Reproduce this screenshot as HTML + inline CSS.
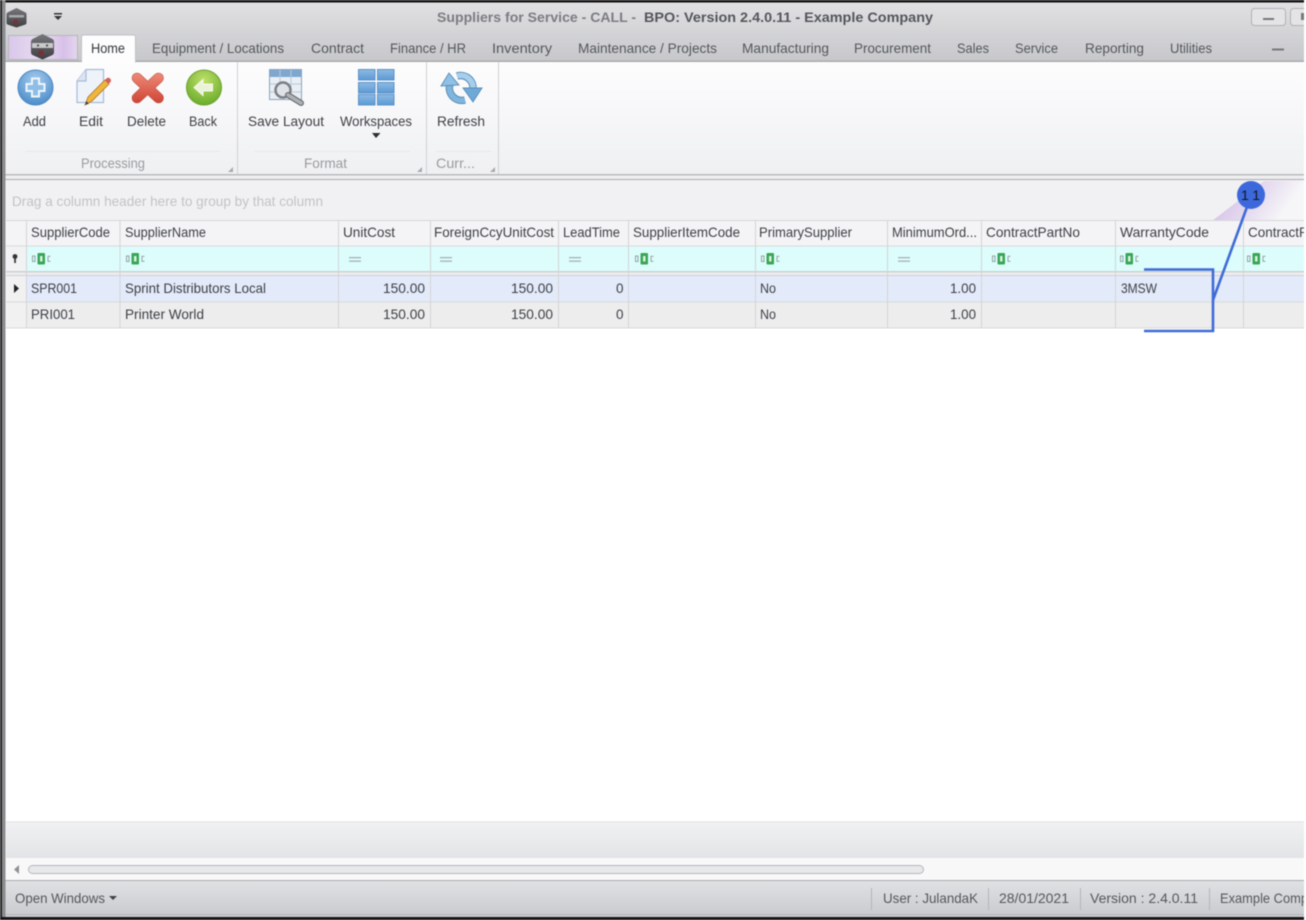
<!DOCTYPE html>
<html><head><meta charset="utf-8"><title>Suppliers for Service</title>
<style>
html,body{margin:0;padding:0;background:#fff;width:1306px;height:920px;overflow:hidden}
svg{display:block;filter:blur(0.4px)}
text{font-family:"Liberation Sans",sans-serif;font-size:14px;fill:#3c3f44;white-space:pre}
.t{fill:#54575c}.g{fill:#9a9b9e}.c{fill:#33363b}
</style></head><body>
<svg width="1306" height="920" viewBox="0 0 1306 920" xmlns="http://www.w3.org/2000/svg">
<defs>
<linearGradient id="tb" x1="0" y1="0" x2="0" y2="1"><stop offset="0" stop-color="#e2e2e4"/><stop offset="1" stop-color="#c6c7ca"/></linearGradient>
<linearGradient id="rb" x1="0" y1="0" x2="0" y2="1"><stop offset="0" stop-color="#fdfdfe"/><stop offset="1" stop-color="#eff0f2"/></linearGradient>
<linearGradient id="pn" x1="0" y1="0" x2="0" y2="1"><stop offset="0" stop-color="#f0f1f2"/><stop offset="1" stop-color="#e3e4e7"/></linearGradient>
<linearGradient id="st" x1="0" y1="0" x2="0" y2="1"><stop offset="0" stop-color="#e0e1e3"/><stop offset="1" stop-color="#c9cacd"/></linearGradient>
<linearGradient id="pu" x1="0" y1="0" x2="1" y2="0"><stop offset="0" stop-color="#d9c8ea"/><stop offset=".5" stop-color="#e9dcf1"/><stop offset=".8" stop-color="#d8c0e8"/><stop offset="1" stop-color="#e4d6ee"/></linearGradient>
<linearGradient id="sw" gradientUnits="userSpaceOnUse" x1="1225" y1="190" x2="1275" y2="225"><stop offset="0" stop-color="#d6c2e8"/><stop offset=".55" stop-color="#e6dcf0"/><stop offset="1" stop-color="#f6f6f8"/></linearGradient>
<radialGradient id="blue" cx=".5" cy=".3" r=".8"><stop offset="0" stop-color="#a9cdec"/><stop offset="1" stop-color="#3d84c6"/></radialGradient>
<radialGradient id="green" cx=".5" cy=".3" r=".8"><stop offset="0" stop-color="#bfe06a"/><stop offset="1" stop-color="#5fa522"/></radialGradient>
<linearGradient id="red" gradientUnits="userSpaceOnUse" x1="0" y1="73" x2="0" y2="103"><stop offset="0" stop-color="#ee8a78"/><stop offset="1" stop-color="#cf4536"/></linearGradient>
<linearGradient id="tile" x1="0" y1="0" x2="0" y2="1"><stop offset="0" stop-color="#8fbbe3"/><stop offset="1" stop-color="#5a99d4"/></linearGradient>
<linearGradient id="hex" x1="0" y1="0" x2="0" y2="1"><stop offset="0" stop-color="#77787c"/><stop offset="1" stop-color="#3d3e42"/></linearGradient>
</defs>

<!-- title bar -->
<rect width="1306" height="62" fill="url(#tb)"/>
<text x="437" y="22" textLength="203" lengthAdjust="spacingAndGlyphs" style="font-weight:bold;fill:#7b7d82">Suppliers for Service - CALL - </text>
<text x="644" y="22" textLength="289" lengthAdjust="spacingAndGlyphs" style="font-weight:bold;fill:#53565b">BPO: Version 2.4.0.11 - Example Company</text>
<!-- app icon -->
<path d="M16.500 8l9 4.500q1 .5 1 1.500v9q0 1-1 1.500l-9 3-9-3q-1-.5-1-1.500v-9q0-1 1-1.500z" fill="url(#hex)"/>
<rect x="9" y="15" width="15" height="2.500" fill="#a8a8aa"/>
<circle cx="15.500" cy="22" r="2.500" fill="#7a3238"/>
<!-- QAT -->
<rect x="54" y="13" width="8" height="1.500" fill="#333"/>
<polygon points="54,16 62,16 58,20" fill="#333"/>
<!-- window btn -->
<rect x="1251.500" y="8.500" width="34" height="17" rx="3" fill="#e4e4e6" stroke="#b0b1b4"/>
<rect x="1263" y="18" width="11" height="2" fill="#76787c"/>
<rect x="1290.500" y="8.500" width="20" height="17" rx="3" fill="#e4e4e6" stroke="#b0b1b4"/>
<rect x="1301" y="13" width="3" height="7" fill="#76787c"/>
<rect x="1272" y="48.500" width="12" height="2" fill="#76787c"/>

<!-- ribbon -->
<rect x="5" y="61" width="1300" height="114" fill="url(#rb)"/>
<rect x="0" y="60.500" width="1306" height="1.500" fill="#a9aaad"/>
<!-- app button -->
<rect x="8.500" y="35.500" width="69" height="24" fill="url(#pu)" stroke="#b6b6ba"/>
<path d="M42.500 34l10 5q1.500 1 1.500 2.500v11q0 1.500-1.500 2.500l-10 4.500-10-4.500q-1.500-1-1.500-2.500v-11q0-1.500 1.500-2.500z" fill="url(#hex)"/>
<rect x="32" y="43" width="21" height="5" fill="#c9c9cc"/>
<rect x="37" y="44.500" width="2" height="2" fill="#555"/><rect x="46" y="44.500" width="2" height="2" fill="#555"/>
<circle cx="41" cy="53" r="3" fill="#73323a"/>
<!-- Home tab -->
<path d="M81.500 62V37q0-2 2-2h50q2 0 2 2v25z" fill="#fdfdfe" stroke="#c0c1c4"/>
<rect x="82" y="60" width="53" height="3" fill="#fdfdfe"/>

<text class="c" x="91" y="53" textLength="34" lengthAdjust="spacingAndGlyphs">Home</text>
<text class="t" x="152" y="53" textLength="132" lengthAdjust="spacingAndGlyphs">Equipment / Locations</text>
<text class="t" x="311" y="53" textLength="53" lengthAdjust="spacingAndGlyphs">Contract</text>
<text class="t" x="390" y="53" textLength="76" lengthAdjust="spacingAndGlyphs">Finance / HR</text>
<text class="t" x="492" y="53" textLength="60" lengthAdjust="spacingAndGlyphs">Inventory</text>
<text class="t" x="578" y="53" textLength="139" lengthAdjust="spacingAndGlyphs">Maintenance / Projects</text>
<text class="t" x="742" y="53" textLength="87" lengthAdjust="spacingAndGlyphs">Manufacturing</text>
<text class="t" x="854" y="53" textLength="77" lengthAdjust="spacingAndGlyphs">Procurement</text>
<text class="t" x="957" y="53" textLength="32" lengthAdjust="spacingAndGlyphs">Sales</text>
<text class="t" x="1015" y="53" textLength="43" lengthAdjust="spacingAndGlyphs">Service</text>
<text class="t" x="1085" y="53" textLength="59" lengthAdjust="spacingAndGlyphs">Reporting</text>
<text class="t" x="1170" y="53" textLength="42" lengthAdjust="spacingAndGlyphs">Utilities</text>

<!-- ribbon separators -->
<rect x="237" y="62" width="1" height="112" fill="#d0d1d4"/>
<rect x="426" y="62" width="1" height="112" fill="#d0d1d4"/>
<rect x="498" y="62" width="1" height="112" fill="#d0d1d4"/>
<rect x="25" y="151" width="195" height="1" fill="#e6e7e9"/>
<rect x="255" y="151" width="155" height="1" fill="#e6e7e9"/>
<rect x="436" y="151" width="55" height="1" fill="#e6e7e9"/>

<!-- Add icon -->
<circle cx="35.500" cy="87.500" r="17.500" fill="url(#blue)" stroke="#4b87bf"/>
<path d="M32 78.500h7v5.500h5.500v7H39v5.500h-7V91h-5.500v-7H32z" fill="#8fbde6" stroke="#eef5fc" stroke-width="2"/>
<!-- Edit icon -->
<path d="M77 81l9-11.500h17.500v33H77z" fill="#eef3fa" stroke="#a9bbd6" stroke-width="1.200"/>
<path d="M77 81h9v-11.500" fill="#dbe5f2" stroke="#a9bbd6" stroke-width="1.200"/>
<path d="M85 105l3-8 17-17 4 4-17 17z" fill="#f0b63c" stroke="#a9762b" stroke-width=".8"/>
<path d="M105 80l2-2q1.500-1 3 .5l.5.5q1 1.500 0 3l-2 2z" fill="#d9605a"/>
<path d="M85 105l1.300-4 2.700 2.700z" fill="#444"/>
<!-- Delete icon -->
<path d="M137 78L158.500 98M158.500 78L137 98" stroke="#b9493c" stroke-width="10.500" stroke-linecap="round" fill="none"/>
<path d="M137 78L158.500 98M158.500 78L137 98" stroke="url(#red)" stroke-width="9.500" stroke-linecap="round" fill="none"/>
<!-- Back icon -->
<circle cx="204" cy="87.500" r="17.500" fill="url(#green)" stroke="#6ba12f"/>
<path d="M194 87.500l9-8v4.500h9.500v7H203v4.500z" fill="#eaf3d8" stroke="#f6faee" stroke-width="1"/>
<!-- Save layout -->
<rect x="269.500" y="69.500" width="32" height="30" fill="#e9eef5" stroke="#8aa3bd"/>
<rect x="270" y="70" width="31" height="7" fill="#7ea7cf"/>
<path d="M280 70v29M291 70v29M270 84h31M270 92h31" stroke="#b9c9da" fill="none"/>
<circle cx="283" cy="90" r="7.500" fill="#dfe3e8" stroke="#7b7f84" stroke-width="2.500"/>
<path d="M288 95L301 103" stroke="#6c7075" stroke-width="6" stroke-linecap="round"/>
<path d="M288 95L301 103" stroke="#aeb1b5" stroke-width="3.500" stroke-linecap="round"/>
<!-- Workspaces -->
<g stroke="#5c92c8" stroke-width="1" fill="url(#tile)">
<rect x="358.500" y="69.500" width="16.500" height="10.500"/><rect x="377.500" y="69.500" width="16.500" height="10.500"/>
<rect x="358.500" y="82.500" width="16.500" height="10.500"/><rect x="377.500" y="82.500" width="16.500" height="10.500"/>
<rect x="358.500" y="94.500" width="16.500" height="10.500"/><rect x="377.500" y="94.500" width="16.500" height="10.500"/>
</g>
<polygon points="372,133 380.500,133 376,138" fill="#2e2e30"/>
<!-- Refresh -->
<g fill="none" stroke-linecap="butt">
<path d="M450 84A12.500 12.500 0 0 0 465 100" stroke="#5b8cb5" stroke-width="7.500"/>
<path d="M473 89A12.500 12.500 0 0 0 457 76" stroke="#5b8cb5" stroke-width="7.500"/>
<path d="M450 84A12.500 12.500 0 0 0 465 100" stroke="#7fb6e0" stroke-width="5.500"/>
<path d="M473 89A12.500 12.500 0 0 0 457 76" stroke="#a5cfec" stroke-width="5.500"/>
</g>
<polygon points="441,86 449,73 459,85" fill="#8fc0e6" stroke="#5b8cb5" stroke-width=".9"/>
<polygon points="463,88 482,88 473,102" fill="#6fa9d8" stroke="#5b8cb5" stroke-width=".9"/>

<text x="23" y="126" textLength="23" lengthAdjust="spacingAndGlyphs">Add</text>
<text x="79" y="126" textLength="24" lengthAdjust="spacingAndGlyphs">Edit</text>
<text x="127" y="126" textLength="39" lengthAdjust="spacingAndGlyphs">Delete</text>
<text x="189" y="126" textLength="28" lengthAdjust="spacingAndGlyphs">Back</text>
<text x="248" y="126" textLength="76" lengthAdjust="spacingAndGlyphs">Save Layout</text>
<text x="340" y="126" textLength="72" lengthAdjust="spacingAndGlyphs">Workspaces</text>
<text x="437" y="126" textLength="48" lengthAdjust="spacingAndGlyphs">Refresh</text>
<text class="g" x="81" y="168" textLength="64" lengthAdjust="spacingAndGlyphs">Processing</text>
<text class="g" x="304" y="168" textLength="43" lengthAdjust="spacingAndGlyphs">Format</text>
<text class="g" x="436" y="168" textLength="39" lengthAdjust="spacingAndGlyphs">Curr...</text>
<polygon points="233,167 233,172 228,172" fill="#a9aaad"/>
<polygon points="422,167 422,172 417,172" fill="#a9aaad"/>
<polygon points="495,167 495,172 490,172" fill="#a9aaad"/>

<!-- band under ribbon -->
<rect x="5" y="174" width="1300" height="1.500" fill="#bbbcc0"/>
<rect x="5" y="175.500" width="1300" height="3.500" fill="#eeeef0"/>
<rect x="5" y="179" width="1300" height="1" fill="#a9abae"/>

<!-- group panel -->
<rect x="6" y="180" width="1299" height="41" fill="#f1f1f3"/>
<path d="M1212 221L1264 181H1305V221z" fill="url(#sw)"/>
<text x="12" y="206" textLength="311" lengthAdjust="spacingAndGlyphs" style="fill:#c2c3c6">Drag a column header here to group by that column</text>

<!-- header row -->
<rect x="6" y="221" width="1299" height="25" fill="#f4f4f6"/>
<rect x="6" y="220" width="1299" height="1" fill="#d6d7da"/>
<!-- filter row -->
<rect x="6" y="246" width="1299" height="25" fill="#dcfdfc"/>
<rect x="6" y="246" width="20" height="25" fill="#f1f2f3"/>
<rect x="6" y="271" width="1299" height="5" fill="#eeeeef"/>
<rect x="6" y="271" width="1299" height="1.500" fill="#cfd0d3"/>
<rect x="6" y="275" width="1299" height="1" fill="#cfd0d3"/>
<!-- rows -->
<rect x="26" y="276" width="1279" height="26" fill="#e3eafa"/>
<rect x="26" y="302" width="1279" height="26" fill="#ededee"/>
<rect x="6" y="276" width="20" height="52" fill="#f1f1f2"/>
<rect x="6" y="301.500" width="1299" height="1" fill="#d8d9dc"/>
<rect x="6" y="327.500" width="1299" height="1" fill="#d8d9dc"/>
<rect x="6" y="245.500" width="1299" height="1" fill="#d8d9dc"/>

<!-- column lines -->
<g fill="#d3d4d7">
<rect x="26" y="221" width="1" height="107"/><rect x="119.500" y="221" width="1" height="107"/><rect x="338" y="221" width="1" height="107"/>
<rect x="430" y="221" width="1" height="107"/><rect x="558" y="221" width="1" height="107"/><rect x="628" y="221" width="1" height="107"/>
<rect x="755" y="221" width="1" height="107"/><rect x="887" y="221" width="1" height="107"/><rect x="981" y="221" width="1" height="107"/>
<rect x="1115" y="221" width="1" height="107"/><rect x="1243" y="221" width="1" height="107"/>
</g>

<text x="31" y="237" textLength="79" lengthAdjust="spacingAndGlyphs">SupplierCode</text>
<text x="125" y="237" textLength="81" lengthAdjust="spacingAndGlyphs">SupplierName</text>
<text x="343" y="237" textLength="52" lengthAdjust="spacingAndGlyphs">UnitCost</text>
<text x="434" y="237" textLength="120" lengthAdjust="spacingAndGlyphs">ForeignCcyUnitCost</text>
<text x="563" y="237" textLength="57" lengthAdjust="spacingAndGlyphs">LeadTime</text>
<text x="633" y="237" textLength="107" lengthAdjust="spacingAndGlyphs">SupplierItemCode</text>
<text x="759" y="237" textLength="93" lengthAdjust="spacingAndGlyphs">PrimarySupplier</text>
<text x="892" y="237" textLength="85" lengthAdjust="spacingAndGlyphs">MinimumOrd...</text>
<text x="986" y="237" textLength="94" lengthAdjust="spacingAndGlyphs">ContractPartNo</text>
<text x="1120" y="237" textLength="89" lengthAdjust="spacingAndGlyphs">WarrantyCode</text>
<text x="1248" y="237" textLength="60" lengthAdjust="spacingAndGlyphs">ContractP</text>

<!-- filter key -->
<circle cx="15" cy="256.500" r="2.400" fill="#333"/><rect x="14.200" y="258" width="1.700" height="5" fill="#333"/>

<!-- ABC icons -->
<g id="abc">
<rect x="37.500" y="253" width="7.500" height="11.500" rx="1" fill="#3aa655"/>
<rect x="40" y="256" width="2.500" height="5.500" fill="#d8f2de"/>
<rect x="32.500" y="256" width="2.500" height="5.500" fill="none" stroke="#8e9a98" stroke-width=".9"/>
<path d="M50.500 256.300h-2.500v5h2.500" fill="none" stroke="#8e9a98" stroke-width=".9"/>
</g>
<use href="#abc" x="94"/><use href="#abc" x="603"/><use href="#abc" x="729"/><use href="#abc" x="960"/><use href="#abc" x="1088"/><use href="#abc" x="1215"/>

<!-- equals -->
<g fill="#a9b1b1">
<rect x="349" y="257" width="12" height="1.300"/><rect x="349" y="260.500" width="12" height="1.300"/>
<rect x="440" y="257" width="12" height="1.300"/><rect x="440" y="260.500" width="12" height="1.300"/>
<rect x="569" y="257" width="12" height="1.300"/><rect x="569" y="260.500" width="12" height="1.300"/>
<rect x="898" y="257" width="12" height="1.300"/><rect x="898" y="260.500" width="12" height="1.300"/>
</g>

<!-- row indicator -->
<polygon points="14,284 19,288.500 14,293" fill="#222"/>

<text x="31" y="293" textLength="46" lengthAdjust="spacingAndGlyphs">SPR001</text>
<text x="125" y="293" textLength="141" lengthAdjust="spacingAndGlyphs">Sprint Distributors Local</text>
<text x="383" y="293" textLength="42" lengthAdjust="spacingAndGlyphs">150.00</text>
<text x="511" y="293" textLength="42" lengthAdjust="spacingAndGlyphs">150.00</text>
<text x="616" y="293" textLength="7.500" lengthAdjust="spacingAndGlyphs">0</text>
<text x="760" y="293" textLength="16" lengthAdjust="spacingAndGlyphs">No</text>
<text x="950" y="293" textLength="26" lengthAdjust="spacingAndGlyphs">1.00</text>
<text x="1121" y="293" textLength="36" lengthAdjust="spacingAndGlyphs">3MSW</text>

<text x="31" y="319" textLength="44" lengthAdjust="spacingAndGlyphs">PRI001</text>
<text x="125" y="319" textLength="79" lengthAdjust="spacingAndGlyphs">Printer World</text>
<text x="383" y="319" textLength="42" lengthAdjust="spacingAndGlyphs">150.00</text>
<text x="511" y="319" textLength="42" lengthAdjust="spacingAndGlyphs">150.00</text>
<text x="616" y="319" textLength="7.500" lengthAdjust="spacingAndGlyphs">0</text>
<text x="760" y="319" textLength="16" lengthAdjust="spacingAndGlyphs">No</text>
<text x="950" y="319" textLength="26" lengthAdjust="spacingAndGlyphs">1.00</text>

<!-- bottom panel -->
<rect x="6" y="821.500" width="1299" height="1" fill="#cfd0d3"/>
<rect x="6" y="822" width="1299" height="36" fill="url(#pn)"/>
<rect x="6" y="858" width="1299" height="22" fill="#f8f8f9"/>
<polygon points="19,865 14,869.500 19,874" fill="#8f9196"/>
<rect x="28.500" y="865.500" width="895" height="8" rx="4" fill="#e7e8ea" stroke="#b4b6ba"/>
<rect x="5" y="880" width="1300" height="1.500" fill="#a9abae"/>

<!-- status bar -->
<rect x="5" y="881" width="1300" height="36" fill="url(#st)"/>
<rect x="5" y="914" width="1300" height="1" fill="#b5b6b9"/>
<text class="t" x="15" y="903" textLength="90" lengthAdjust="spacingAndGlyphs">Open Windows</text>
<polygon points="109,896 117,896 113,900" fill="#3f4146"/>
<g fill="#b4b5b8"><rect x="871" y="888" width="1" height="22"/><rect x="988" y="888" width="1" height="22"/><rect x="1080" y="888" width="1" height="22"/><rect x="1209" y="888" width="1" height="22"/></g>
<text class="t" x="883" y="903" textLength="95" lengthAdjust="spacingAndGlyphs">User : JulandaK</text>
<text class="t" x="999" y="903" textLength="70" lengthAdjust="spacingAndGlyphs">28/01/2021</text>
<text class="t" x="1090" y="903" textLength="108" lengthAdjust="spacingAndGlyphs">Version : 2.4.0.11</text>
<text class="t" x="1220" y="903" textLength="88" lengthAdjust="spacingAndGlyphs">Example Comp</text>

<!-- callout -->
<path d="M1144 269.500H1213V331H1144" fill="none" stroke="#3f6bd8" stroke-width="2.600"/>
<path d="M1247 207L1213 300" fill="none" stroke="#3f6bd8" stroke-width="2.600"/>
<circle cx="1251" cy="195" r="14" fill="#3d68dc"/>
<text x="1241" y="200" textLength="19" style="fill:#10151f">11</text>

<!-- frame -->
<rect x="0" y="0" width="1306" height="2.500" fill="#111"/>
<rect x="0" y="0" width="2" height="920" fill="#222"/>
<rect x="2" y="0" width="3.500" height="920" fill="#8b8c8f"/>
<rect x="0" y="917" width="1306" height="3" fill="#161616"/>
<rect x="1304" y="0" width="2" height="920" fill="#fff"/>
</svg>
</body></html>
